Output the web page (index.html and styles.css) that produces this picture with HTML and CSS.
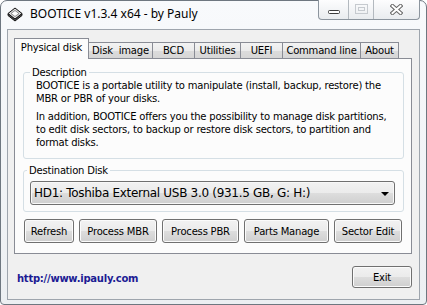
FILE: index.html
```html
<!DOCTYPE html>
<html lang="en">
<head>
  <meta charset="UTF-8" />
  <title>BOOTICE v1.3.4 x64 - by Pauly</title>
  <link rel="stylesheet" href="styles.css">
</head>
<body>
  <div class="window">
    <div class="titlebar">
      <svg class="app-icon" width="16" height="15" viewBox="0 0 16 15">
        <path d="M1 6.5 L1 8.5 L8 14 L15 8.5 L15 6.5 L8 12 Z" fill="#5a5a5a" stroke="#111" stroke-width="1" stroke-linejoin="round" />
        <path d="M8 1 L15 6.5 L8 12 L1 6.5 Z" fill="#d8d8d8" stroke="#111" stroke-width="1" stroke-linejoin="round" />
        <path d="M8 3.5 L12 6.5 L8 9.5 L4 6.5 Z" fill="#fff" stroke="#777" stroke-width="0.8" />
      </svg>
      <span class="title">BOOTICE v1.3.4 x64 - by Pauly</span>
      <div class="caption-buttons">
        <span class="cb cb-min">
          <svg width="14" height="6" viewBox="0 0 14 6"><rect x="1.5" y="1.5" width="11" height="3" rx="1" fill="#fff" stroke="#3c3c3c" /></svg>
        </span>
        <span class="cb cb-max">
          <svg width="13" height="10" viewBox="0 0 13 10"><rect x="0.5" y="0.5" width="12" height="9" fill="none" stroke="#c6cacf" /><rect x="3.5" y="3.5" width="6" height="3" fill="none" stroke="#c6cacf" /></svg>
        </span>
        <span class="cb cb-close">
          <svg width="13" height="11" viewBox="0 0 13 11">
            <path d="M2.5 2 L10.5 9 M10.5 2 L2.5 9" stroke="#666" stroke-width="4" stroke-linecap="square" />
            <path d="M2.5 2 L10.5 9 M10.5 2 L2.5 9" stroke="#fff" stroke-width="2" stroke-linecap="square" />
          </svg>
        </span>
      </div>
    </div>

    <div class="client">
      <div class="tabs">
        <div class="tab active tab-physical">Physical disk</div>
        <div class="tab tab-image">Disk&nbsp; image</div>
        <div class="tab tab-bcd">BCD</div>
        <div class="tab tab-utilities">Utilities</div>
        <div class="tab tab-uefi">UEFI</div>
        <div class="tab tab-cmd">Command line</div>
        <div class="tab tab-about">About</div>
      </div>

      <div class="panel">
        <fieldset class="group group-desc">
          <legend>Description</legend>
          <p>BOOTICE is a portable utility to manipulate (install, backup, restore) the<br>MBR or PBR of your disks.</p>
          <p>In addition, BOOTICE offers you the possibility to manage disk partitions,<br>to edit disk sectors, to backup or restore disk sectors, to partition and<br>format disks.</p>
        </fieldset>

        <fieldset class="group group-dest">
          <legend>Destination Disk</legend>
          <div class="combo">
            <span class="combo-text">HD1: Toshiba External USB 3.0 (931.5 GB, G: H:)</span>
            <span class="combo-arrow"></span>
          </div>
        </fieldset>

        <div class="actions">
          <button class="btn btn-refresh">Refresh</button>
          <button class="btn btn-mbr">Process MBR</button>
          <button class="btn btn-pbr">Process PBR</button>
          <button class="btn btn-parts">Parts Manage</button>
          <button class="btn btn-sector">Sector Edit</button>
        </div>
      </div>

      <div class="footer">
        <a class="site-link" href="#">http://www.ipauly.com</a>
        <button class="btn btn-exit">Exit</button>
      </div>
    </div>
  </div>
</body>
</html>
```

FILE: styles.css
```css
* {
  margin: 0;
  padding: 0;
  box-sizing: border-box;
}

body {
  background: #fff;
  font-family: "DejaVu Sans", Verdana, sans-serif;
  font-size: 10px;
  letter-spacing: -0.2px;
  color: #000;
}

.window {
  width: 427px;
  height: 305px;
  display: flex;
  flex-direction: column;
  padding: 0 6px 4px 6px;
  border: 1px solid #6e7780;
  border-radius: 7px 7px 4px 4px;
  background: linear-gradient(#f8fafc, #eceff2);
}

/* title bar */
.titlebar {
  height: 28px;
  display: flex;
  align-items: flex-start;
}

.app-icon {
  margin-top: 6px;
  flex: none;
}

.title {
  margin: 5px 0 0 7px;
  font-family: "Noto Sans", "Open Sans", sans-serif;
  font-size: 12px;
  line-height: 16px;
  letter-spacing: 0;
  color: #000;
}

.caption-buttons {
  margin: -1px 0 0 auto;
  height: 20px;
  display: flex;
  border: 1px solid #8c959e;
  border-top: none;
  border-radius: 0 0 4px 4px;
  overflow: hidden;
  background: linear-gradient(#fdfdfe, #e9ecef);
}

.cb {
  display: flex;
  align-items: center;
  justify-content: center;
}

.cb-min {
  width: 29px;
  padding-top: 4px;
}

.cb-max {
  width: 25px;
  border-left: 1px solid #b3b9bf;
  padding-bottom: 2px;
}

.cb-close {
  width: 46px;
  border-left: 1px solid #b3b9bf;
  padding-bottom: 1px;
}

/* client area */
.client {
  flex: 1;
  display: flex;
  flex-direction: column;
  border: 1px solid #9ea5ad;
  background: #f0f0f0;
}

.tabs {
  display: flex;
  align-items: flex-end;
  height: 20px;
  margin: 8px 0 0 6px;
}

.tab {
  height: 16px;
  margin-left: -1px;
  border: 1px solid #898c95;
  border-bottom: none;
  background: linear-gradient(#f3f3f3, #ebebeb 50%, #dcdcdc 51%, #d6d6d6);
  text-align: center;
  line-height: 15px;
  white-space: nowrap;
}

.tab.active {
  position: relative;
  z-index: 1;
  height: 21px;
  margin-left: 0;
  margin-bottom: -1px;
  background: #fcfcfc;
  line-height: 17px;
}

.tab-physical { width: 75px; }
.tab-image { width: 65px; }
.tab-bcd { width: 43px; }
.tab-utilities { width: 47px; }
.tab-uefi { width: 43px; }
.tab-cmd { width: 79px; }
.tab-about { width: 39px; }

.panel {
  width: 398px;
  height: 196px;
  margin-left: 6px;
  padding: 7px 0 0 8px;
  border: 1px solid #898c95;
  background: #fcfcfc;
}

/* group boxes */
.group {
  width: 381px;
  min-width: 0;
  border: 1px solid #d5dfe5;
  border-radius: 3px;
  padding: 0 8px 9px 12px;
}

.group legend {
  margin-left: -6px;
  padding: 0 2px;
  line-height: 13px;
}

.group-desc p {
  line-height: 13px;
  white-space: nowrap;
}

.group-desc p + p {
  margin-top: 5px;
}

.group-dest {
  margin-top: 5px;
  padding: 0 0 6px 6px;
}

.group-dest legend {
  margin-left: -3px;
}

.combo {
  width: 365px;
  height: 24px;
  margin-top: 4px;
  display: flex;
  align-items: center;
  padding: 0 0 0 3px;
  border: 1px solid #707070;
  border-radius: 3px;
  background: linear-gradient(#f2f2f2, #ebebeb 50%, #dddddd 51%, #cfcfcf);
  box-shadow: inset 0 0 0 1px #f8f8f8;
  font-size: 12px;
  letter-spacing: -0.3px;
  white-space: nowrap;
}

.combo-arrow {
  margin: 1px 5px 0 auto;
  width: 0;
  height: 0;
  border-left: 4px solid transparent;
  border-right: 4px solid transparent;
  border-top: 4px solid #000;
}

/* buttons */
.btn {
  height: 24px;
  border: 1px solid #707070;
  border-radius: 3px;
  background: linear-gradient(#f2f2f2, #ebebeb 50%, #dddddd 51%, #cfcfcf);
  box-shadow: inset 0 0 0 1px #fbfbfb;
  font-family: "DejaVu Sans", Verdana, sans-serif;
  font-size: 10px;
  letter-spacing: -0.2px;
  color: #000;
  white-space: nowrap;
}

.actions {
  display: flex;
  gap: 5px;
  margin: 7px 0 0 1px;
}

.btn-refresh { width: 50px; }
.btn-mbr { width: 78px; }
.btn-pbr { width: 77px; }
.btn-parts { width: 85px; }
.btn-sector { width: 68px; }

.footer {
  display: flex;
  align-items: center;
  margin-top: 12px;
  padding: 0 7px 0 9px;
}

.site-link {
  margin-top: 2px;
  font-weight: bold;
  letter-spacing: -0.25px;
  color: #1c1c94;
  text-decoration: none;
}

.btn-exit {
  width: 60px;
  height: 22px;
  margin-left: auto;
}
```
